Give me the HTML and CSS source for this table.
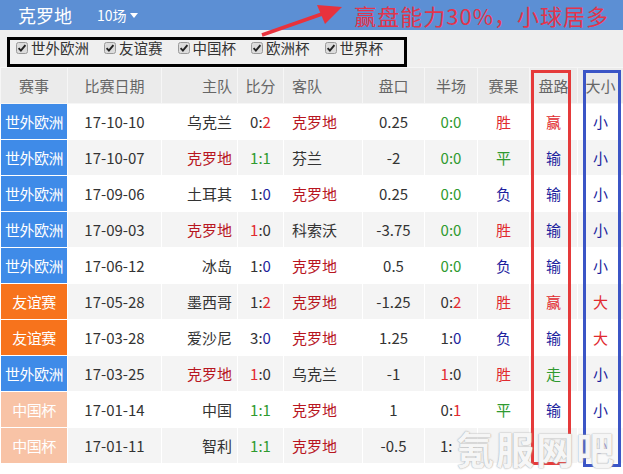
FILE: index.html
```html
<!DOCTYPE html>
<html lang="zh">
<head>
<meta charset="utf-8">
<link rel="stylesheet" href="styles.css">
</head>
<body>
<div class="page">
  <div class="topbar">
    <span class="team-title">克罗地</span>
    <span class="count">10场<span class="caret"></span></span>
    <span class="note">赢盘能力30%，小球居多</span>
  </div>
  <svg class="arrow" width="90" height="40" viewBox="0 0 90 40">
    <path d="M2 33 L62 12" stroke="#e8323c" stroke-width="3.5" fill="none"/>
    <polygon points="57,3 82,5 65,22" fill="#e8323c"/>
  </svg>
  <div class="filters">
    <div class="filter-box">
      <label class="fitem"><svg class="cb" viewBox="0 0 12 12"><rect x="0.5" y="0.5" width="11" height="11" rx="2" fill="#dcdcdc" stroke="#9a9a9a"/><path d="M2.6 6.2 L4.9 8.6 L9.4 3.2" stroke="#222" stroke-width="1.9" fill="none"/></svg>世外欧洲</label>
      <label class="fitem"><svg class="cb" viewBox="0 0 12 12"><rect x="0.5" y="0.5" width="11" height="11" rx="2" fill="#dcdcdc" stroke="#9a9a9a"/><path d="M2.6 6.2 L4.9 8.6 L9.4 3.2" stroke="#222" stroke-width="1.9" fill="none"/></svg>友谊赛</label>
      <label class="fitem"><svg class="cb" viewBox="0 0 12 12"><rect x="0.5" y="0.5" width="11" height="11" rx="2" fill="#dcdcdc" stroke="#9a9a9a"/><path d="M2.6 6.2 L4.9 8.6 L9.4 3.2" stroke="#222" stroke-width="1.9" fill="none"/></svg>中国杯</label>
      <label class="fitem"><svg class="cb" viewBox="0 0 12 12"><rect x="0.5" y="0.5" width="11" height="11" rx="2" fill="#dcdcdc" stroke="#9a9a9a"/><path d="M2.6 6.2 L4.9 8.6 L9.4 3.2" stroke="#222" stroke-width="1.9" fill="none"/></svg>欧洲杯</label>
      <label class="fitem"><svg class="cb" viewBox="0 0 12 12"><rect x="0.5" y="0.5" width="11" height="11" rx="2" fill="#dcdcdc" stroke="#9a9a9a"/><path d="M2.6 6.2 L4.9 8.6 L9.4 3.2" stroke="#222" stroke-width="1.9" fill="none"/></svg>世界杯</label>
    </div>
  </div>
  <div class="table-wrap">
    <table class="matches">
      <colgroup>
        <col class="c1"><col class="c2"><col class="c3"><col class="c4"><col class="c5">
        <col class="c6"><col class="c7"><col class="c8"><col class="c9"><col class="c10">
      </colgroup>
      <thead>
        <tr><th>赛事</th><th>比赛日期</th><th class="home">主队</th><th>比分</th><th class="away">客队</th><th>盘口</th><th>半场</th><th>赛果</th><th>盘路</th><th>大小</th></tr>
      </thead>
      <tbody>
        <tr><td class="lg wc">世外欧洲</td><td>17-10-10</td><td class="home">乌克兰</td><td>0:<span class="r">2</span></td><td class="away cro">克罗地</td><td>0.25</td><td class="g">0:0</td><td class="r">胜</td><td class="r">赢</td><td class="b">小</td></tr>
        <tr><td class="lg wc">世外欧洲</td><td>17-10-07</td><td class="home cro">克罗地</td><td class="g">1:1</td><td class="away">芬兰</td><td>-2</td><td class="g">0:0</td><td class="g">平</td><td class="b">输</td><td class="b">小</td></tr>
        <tr><td class="lg wc">世外欧洲</td><td>17-09-06</td><td class="home">土耳其</td><td>1:<span class="b">0</span></td><td class="away cro">克罗地</td><td>0.25</td><td class="g">0:0</td><td class="b">负</td><td class="b">输</td><td class="b">小</td></tr>
        <tr><td class="lg wc">世外欧洲</td><td>17-09-03</td><td class="home cro">克罗地</td><td><span class="r">1</span>:0</td><td class="away">科索沃</td><td>-3.75</td><td class="g">0:0</td><td class="r">胜</td><td class="b">输</td><td class="b">小</td></tr>
        <tr><td class="lg wc">世外欧洲</td><td>17-06-12</td><td class="home">冰岛</td><td>1:<span class="b">0</span></td><td class="away cro">克罗地</td><td>0.5</td><td class="g">0:0</td><td class="b">负</td><td class="b">输</td><td class="b">小</td></tr>
        <tr><td class="lg fr">友谊赛</td><td>17-05-28</td><td class="home">墨西哥</td><td>1:<span class="r">2</span></td><td class="away cro">克罗地</td><td>-1.25</td><td>0:<span class="r">2</span></td><td class="r">胜</td><td class="r">赢</td><td class="r">大</td></tr>
        <tr><td class="lg fr">友谊赛</td><td>17-03-28</td><td class="home">爱沙尼</td><td>3:<span class="b">0</span></td><td class="away cro">克罗地</td><td>1.25</td><td>1:<span class="b">0</span></td><td class="b">负</td><td class="b">输</td><td class="r">大</td></tr>
        <tr><td class="lg wc">世外欧洲</td><td>17-03-25</td><td class="home cro">克罗地</td><td><span class="r">1</span>:0</td><td class="away">乌克兰</td><td>-1</td><td><span class="r">1</span>:0</td><td class="r">胜</td><td class="g">走</td><td class="b">小</td></tr>
        <tr><td class="lg cc">中国杯</td><td>17-01-14</td><td class="home">中国</td><td class="g">1:1</td><td class="away cro">克罗地</td><td>1</td><td>0:<span class="r">1</span></td><td class="g">平</td><td class="b">输</td><td class="b">小</td></tr>
        <tr><td class="lg cc">中国杯</td><td>17-01-11</td><td class="home">智利</td><td class="g">1:1</td><td class="away cro">克罗地</td><td>-0.5</td><td class="half-cut">1:</td><td></td><td></td><td class="b faint">小</td></tr>
      </tbody>
    </table>
    <div class="mark mark-red"></div>
    <div class="mark mark-blue"></div>
    <div class="watermark">氪服网吧</div>
  </div>
</div>
</body>
</html>
```

FILE: styles.css
```css
html, body {
  margin: 0;
  padding: 0;
  background: #fff;
}
body {
  font-family: "Noto Sans CJK SC", "Noto Sans", sans-serif;
  color: #333;
}
.page {
  position: relative;
  width: 623px;
  height: 474px;
  overflow: hidden;
}
.topbar {
  height: 30px;
  background: #5c8fd4;
  display: flex;
  align-items: center;
  padding-left: 18px;
  color: #fff;
}
.team-title {
  font-size: 18px;
  line-height: 30px;
  width: 79px;
}
.count {
  font-size: 14px;
  line-height: 30px;
  display: flex;
  align-items: center;
}
.caret {
  display: inline-block;
  margin-left: 3px;
  margin-top: 1px;
  width: 0;
  height: 0;
  border-left: 4.5px solid transparent;
  border-right: 4.5px solid transparent;
  border-top: 5px solid #fff;
}
.note {
  margin-left: auto;
  margin-right: 14px;
  font-size: 22px;
  line-height: 30px;
  color: #e3344c;
  letter-spacing: 1px;
}
.arrow {
  position: absolute;
  left: 260px;
  top: 2px;
}
.filters {
  background: #efefef;
  padding: 7px 0 0 7px;
  height: 30px;
}
.filter-box {
  box-sizing: border-box;
  width: 400px;
  height: 30px;
  border: 3px solid #000;
  display: flex;
  align-items: flex-start;
  padding-left: 6px;
  gap: 15px;
}
.fitem {
  display: flex;
  align-items: center;
  gap: 3px;
  font-size: 14.5px;
  line-height: 16px;
  height: 16px;
  color: #333;
}
.cb {
  width: 12px;
  height: 12px;
  flex: none;
}
.table-wrap {
  position: relative;
}
.matches {
  width: 623px;
  table-layout: fixed;
  border-collapse: collapse;
  font-size: 15px;
}
.c1 { width: 67px; }
.c2 { width: 94px; }
.c3 { width: 76px; }
.c4 { width: 46px; }
.c5 { width: 79px; }
.c6 { width: 62px; }
.c7 { width: 53px; }
.c8 { width: 52px; }
.c9 { width: 48px; }
.c10 { width: 46px; }
.matches th, .matches td {
  height: 35px;
  padding: 0;
  border: 1px solid #fff;
  text-align: center;
  white-space: nowrap;
  overflow: hidden;
}
.matches th {
  background: #ebebeb;
  color: #666;
  font-weight: normal;
  font-size: 15px;
  border-color: #f6f6f6;
}
.matches tbody tr:nth-child(even) td {
  background: #f4f4f4;
}
.matches th.home, .matches td.home {
  text-align: right;
  padding-right: 5px;
}
.matches th.away, .matches td.away {
  text-align: left;
  padding-left: 8px;
}
.matches td.half-cut {
  text-align: left;
  padding-left: 15px;
}
.matches td.lg {
  color: #fff;
  font-size: 15px;
  letter-spacing: -0.5px;
}
.matches tbody tr td.wc { background: #3f8be8; }
.matches tbody tr td.fr { background: #f7731c; }
.matches tbody tr td.cc { background: #f8c3a6; }
.cro { color: #b8161f; }
.r { color: #e12a2f; }
.g { color: #2f9a2f; }
.b { color: #1d1f9e; }
.faint { opacity: 0.5; }
.mark {
  position: absolute;
  top: 3px;
  box-sizing: border-box;
  border: 3px solid #e53a3a;
}
.mark-red {
  left: 531px;
  width: 40px;
  height: 395px;
}
.mark-blue {
  left: 583px;
  width: 38px;
  height: 397px;
  border-color: #3b55c6;
}
.watermark {
  position: absolute;
  left: 456px;
  top: 364px;
  font-size: 38px;
  line-height: 34px;
  font-weight: bold;
  letter-spacing: 2px;
  color: rgba(255, 255, 255, 0.9);
  text-shadow: 0 0 2px #bbb, 0 0 1px #999;
}
```
